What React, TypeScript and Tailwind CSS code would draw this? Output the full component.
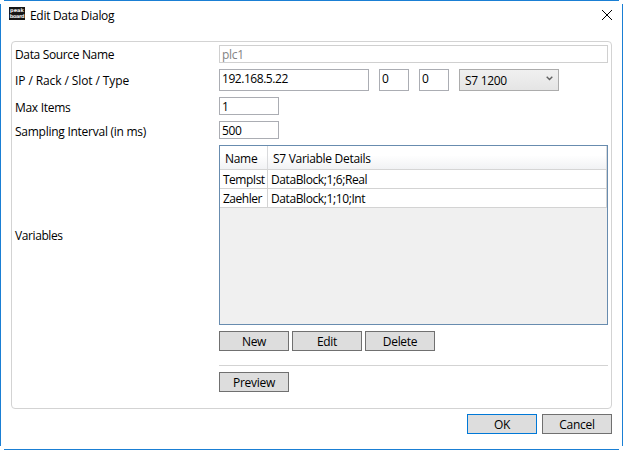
import type { ReactNode } from "react";

function Field({ className, children }: { className: string; children: ReactNode }) {
  return (
    <div className={`box-border border border-[#abadb3] bg-white pl-[2px] leading-4 ${className}`}>
      {children}
    </div>
  );
}

function Button({ children, primary = false }: { children: ReactNode; primary?: boolean }) {
  return (
    <button
      className={`flex h-5 w-[70px] shrink-0 items-center justify-center border bg-[#dddddd] leading-4 ${
        primary ? "border-[#0078d7]" : "border-[#707070]"
      }`}
    >
      <span className="relative top-px">{children}</span>
    </button>
  );
}

function Row({ label, className, labelClass = "", children }: {
  label: string;
  className: string;
  labelClass?: string;
  children: ReactNode;
}) {
  return (
    <div className={`flex ${className}`}>
      <div className={`w-[204px] shrink-0 leading-4 ${labelClass}`}>{label}</div>
      {children}
    </div>
  );
}

function Logo() {
  return (
    <div className="mt-[7px] flex h-[13px] w-4 flex-col items-center bg-[#151515] font-['DejaVu_Sans',sans-serif] text-[5px] font-bold leading-[6px] text-[#f0f0f0]">
      <span className="h-[6px] tracking-[0.1px]">peak</span>
      <span className="h-[6px] tracking-[-0.4px]">board</span>
    </div>
  );
}

const variables = [
  { name: "TempIst", details: "DataBlock;1;6;Real" },
  { name: "Zaehler", details: "DataBlock;1;10;Int" },
];

export default function App() {
  return (
    <div className="relative h-[450px] w-[623px] overflow-hidden bg-white font-['Open_Sans','Noto_Sans',sans-serif] text-[12px] tracking-[-0.3px] text-black">
      <div className="absolute left-1 right-1 top-0 h-px bg-[#1a7fd4]" />
      <div className="absolute bottom-0 left-1 right-1 h-px bg-[#1a7fd4]" />
      <div className="absolute bottom-1 left-0 top-1 w-px bg-[#1a7fd4]" />
      <div className="absolute bottom-1 right-0 top-1 w-px bg-[#1a7fd4]" />

      <header className="flex h-[41px] pl-[9px] pr-[11px]">
        <Logo />
        <h1 className="ml-[5px] mt-2 leading-4">Edit Data Dialog</h1>
        <svg className="ml-auto mt-[10px] h-[10px] w-[10px]" viewBox="0 0 10 10" fill="none" stroke="#000">
          <path d="M0 0 10 10M10 0 0 10" />
        </svg>
      </header>

      <main className="ml-[11px] flex h-[368px] w-[601px] flex-col rounded-[4px] border border-[#d3d3d3] pl-[3px] pr-[3px] pt-[3px]">
        <Row label="Data Source Name" className="h-6" labelClass="pt-[2px] tracking-[-0.35px]">
          <Field className="h-[18px] w-[389px] border-[#d0d0d0] pt-px text-[#838383]">plc1</Field>
        </Row>
        <Row label="IP / Rack / Slot / Type" className="h-7" labelClass="pt-1 tracking-[-0.1px]">
          <Field className="h-[22px] w-[150px] pt-px tracking-[-0.45px]">192.168.5.22</Field>
          <Field className="ml-[10px] h-[22px] w-[30px] pt-px">0</Field>
          <Field className="ml-[10px] h-[22px] w-[30px] pt-px">0</Field>
          <div className="ml-[10px] flex h-[22px] w-[100px] justify-between border border-[#acacac] bg-linear-to-b from-[#f0f0f0] to-[#e5e5e5] pl-[5px] pr-[5px] pt-[3px] leading-4">
            <span>S7 1200</span>
            <svg className="mt-[3px] h-[5px] w-[7px]" viewBox="0 0 7 5" fill="none" stroke="#606060" strokeWidth="1.4">
              <path d="M.7.7 3.5 3.5 6.3.7" />
            </svg>
          </div>
        </Row>
        <Row label="Max Items" className="h-6" labelClass="pt-[3px]">
          <Field className="h-[18px] w-[60px] pt-px">1</Field>
        </Row>
        <Row label="Sampling Interval (in ms)" className="h-6" labelClass="pt-[3px] tracking-[-0.26px]">
          <Field className="h-[18px] w-[60px] pt-px tracking-[-0.4px]">500</Field>
        </Row>
        <Row label="Variables" className="h-[186px]" labelClass="pt-[83px] tracking-[-0.4px]">
          <div className="h-[180px] w-[389px] border border-[#688caf] bg-[#f0f0f0]">
            <div className="flex h-6 border-b border-[#d5d5d5] bg-linear-to-b from-white from-40% to-[#f1f2f4] leading-4">
              <div className="w-12 border-r border-[#d9dadc] pl-[5px] pt-[5px]">Name</div>
              <div className="flex-1 border-r border-[#d9dadc] pl-[5px] pt-[5px]">S7 Variable Details</div>
            </div>
            {variables.map((v) => (
              <div key={v.name} className="flex h-[19px] border-b border-[#d3d3d3] bg-white leading-4">
                <div className="w-12 border-r border-[#d3d3d3] pl-[3px] pt-[2px] tracking-[-0.5px]">{v.name}</div>
                <div className="flex-1 border-r border-[#d3d3d3] pl-[3px] pt-[2px] tracking-[-0.4px]">{v.details}</div>
              </div>
            ))}
          </div>
        </Row>
        <div className="ml-[204px] flex h-[34px] gap-[3px]">
          <Button>New</Button>
          <Button>Edit</Button>
          <Button>Delete</Button>
        </div>
        <div className="ml-[204px] w-[389px] border-t border-[#d3d3d3] pt-[6px]">
          <Button>Preview</Button>
        </div>
      </main>

      <footer className="flex justify-end gap-[5px] pr-[11px] pt-[5px]">
        <Button primary>OK</Button>
        <Button>Cancel</Button>
      </footer>
    </div>
  );
}
